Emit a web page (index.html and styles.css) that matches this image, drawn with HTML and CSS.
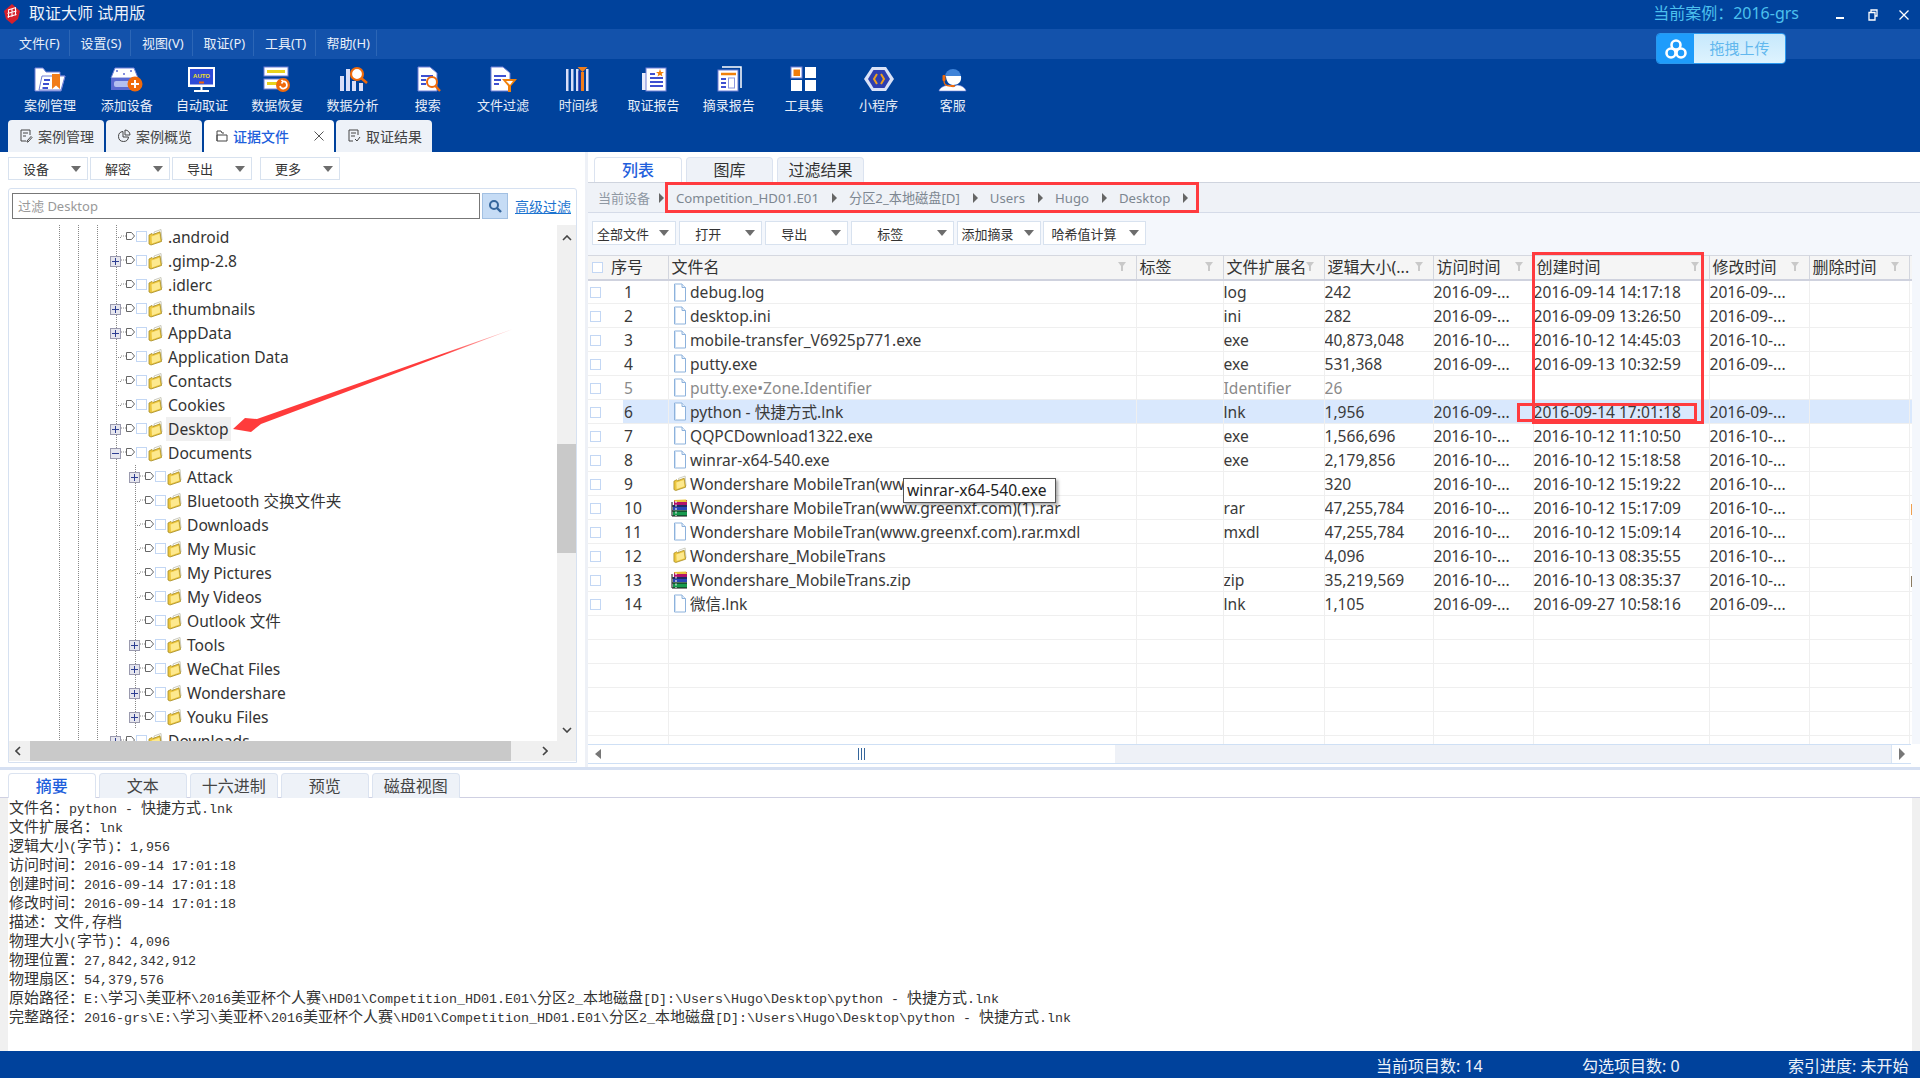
FILE: index.html
```html
<!DOCTYPE html>
<html lang="zh-CN">
<head>
<meta charset="utf-8">
<title>取证大师 试用版</title>
<link rel="stylesheet" href="styles.css">
</head>
<body>
<svg class="defs" width="0" height="0">
  <symbol id="folder" viewBox="0 0 15 17">
    <path d="M6 3 13 .5 14 11 7 13Z" fill="#fff" stroke="#b5b5a0" stroke-width=".7"/>
    <path d="M1 6 4 4.500 5 5.500 12 2.800 13.500 12.500 3 16 1 15Z" fill="#ecc63e" stroke="#a58a22" stroke-width=".8"/>
    <path d="M3.500 7.500 11.500 4.800 12.300 11.500 4 14.500Z" fill="#fde98e"/>
  </symbol>
  <symbol id="mk" viewBox="0 0 14 10">
    <path d="M0 5H5" stroke="#888" stroke-dasharray="1 1"/>
    <path d="M5.500 1.500H10.500L13.500 5 10.500 8.500H5.500Z" fill="#fff" stroke="#666"/>
  </symbol>
  <symbol id="file" viewBox="0 0 13 19">
    <path d="M1 1H8.500L12 4.500V18H1Z" fill="#fff" stroke="#8db2dc" stroke-width="1"/>
    <path d="M8.500 1V4.500H12" fill="#e6eef8" stroke="#8db2dc" stroke-width="1"/>
    <path d="M2 2V17" stroke="#d2e2f4" stroke-width="1"/>
  </symbol>
  <symbol id="rar" viewBox="0 0 17 18">
    <rect x="3" y="1" width="13" height="5" fill="#b0126c"/>
    <path d="M3 1 15 .5 16 3 4 3Z" fill="#e8c23a"/>
    <rect x="2" y="6" width="14" height="5" fill="#2a46b8"/>
    <rect x="2" y="11.500" width="14" height="5.500" fill="#179a4e"/>
    <path d="M1 3V17M1 7H16M1 12H16M1 17H16" stroke="#111" stroke-width="1" fill="none"/>
    <path d="M5 2V17" stroke="#eee" stroke-width="1.200" stroke-dasharray="2 1.500"/>
  </symbol>
  <symbol id="funnel" viewBox="0 0 8 9">
    <path d="M0 0H8L5 4V9H3V4Z" fill="#c9c9c9"/>
  </symbol>
</svg>

<div class="app">
  <header class="head">
    <div class="titlebar">
      <div class="title-left">
        <svg class="logo" viewBox="0 0 18 20"><path d="M9 0 17 7 15 15 9 20 3 15 1 7Z" fill="#d6202b"/><path d="M5 6 13 3.500M4.500 9.500 13.500 7M4.500 13 13.500 10.500M5.500 5.500V14M9 5V13M12.500 4V11.500" stroke="#fff" stroke-width="1.100" fill="none"/></svg>
        <span>取证大师 试用版</span>
      </div>
      <div class="title-right">
        <span class="case">当前案例：2016-grs</span>
        <svg class="win win-min" viewBox="0 0 12 12"><path d="M2 9H10" stroke="#fff" stroke-width="2"/></svg>
        <svg class="win win-res" viewBox="0 0 12 12"><path d="M4 3V1H10V7H8M2 3.500H8V11H2Z" stroke="#fff" stroke-width="1.300" fill="none"/></svg>
        <svg class="win win-cls" viewBox="0 0 12 12"><path d="M1.500 1.500 10.500 10.500M10.500 1.500 1.500 10.500" stroke="#fff" stroke-width="1.300"/></svg>
      </div>
    </div>

    <nav class="menubar">
      <span class="menu-item">文件(F)</span><span class="menu-item">设置(S)</span><span class="menu-item">视图(V)</span><span class="menu-item">取证(P)</span><span class="menu-item">工具(T)</span><span class="menu-item">帮助(H)</span>
    </nav>

    <div class="toolbar">
      <div class="tool">
        <svg viewBox="0 0 34 26"><path d="M2 25V2H10L13 6H27V10H32L28 25Z" fill="#fff" stroke="#6f7fd6" stroke-width="1"/><path d="M6 24 9 10H32L28 24Z" fill="#fff" stroke="#6f7fd6"/><path d="M11 14H17M10 18H16M9.500 22H15" stroke="#3e50d0" stroke-width="1.800"/><path d="M19 8H27V23L23 19.500 19 23Z" fill="#f07d1a"/></svg>
        <span>案例管理</span>
      </div>
      <div class="tool">
        <svg viewBox="0 0 34 26"><path d="M1 12 5 2H24L28 12Z" fill="#fff" stroke="#6f7fd6"/><path d="M1 12H28V24H1Z" fill="#5a6ad2"/><rect x="4" y="15" width="16" height="6" rx="2" fill="#b4bff0"/><circle cx="7" cy="5" r="1" fill="#5a6ad2"/><circle cx="21" cy="5" r="1" fill="#5a6ad2"/><circle cx="14" cy="8" r="1" fill="#5a6ad2"/><circle cx="25" cy="18" r="7.500" fill="#f06a0a"/><path d="M25 14V22M21 18H29" stroke="#fff" stroke-width="2"/></svg>
        <span>添加设备</span>
      </div>
      <div class="tool">
        <svg viewBox="0 0 34 26"><rect x="3" y="1" width="27" height="20" fill="#fff"/><rect x="5" y="3" width="23" height="15.500" fill="#2d4ad6"/><text x="16.500" y="12" class="auto" text-anchor="middle">AUTO</text><rect x="14" y="15.500" width="5" height="2" fill="#f0620a"/><path d="M16.500 21V24M9 25H24" stroke="#fff" stroke-width="2"/></svg>
        <span>自动取证</span>
      </div>
      <div class="tool">
        <svg viewBox="0 0 34 26"><rect x="4" y="1" width="24" height="9" fill="#fff" stroke="#6f7fd6"/><rect x="7" y="4" width="18" height="3" fill="#e8d21c"/><rect x="4" y="13" width="22" height="10" fill="#fff" stroke="#6f7fd6"/><rect x="7" y="16" width="12" height="3" fill="#e8d21c"/><circle cx="23" cy="19" r="7" fill="#f06a0a"/><path d="M20 20A3.500 3.500 0 1 0 23 15.500L21.500 14M23 15.500 21.500 17.500" stroke="#fff" stroke-width="1.700" fill="none"/></svg>
        <span>数据恢复</span>
      </div>
      <div class="tool">
        <svg viewBox="0 0 34 26"><rect x="4" y="10" width="4" height="15" fill="#d9def8"/><rect x="10" y="3" width="4" height="22" fill="#d9def8"/><rect x="16" y="15" width="4" height="10" fill="#d9def8"/><rect x="23" y="17" width="4" height="8" fill="#d9def8"/><circle cx="21" cy="8" r="6" fill="#fff" stroke="#f06a0a" stroke-width="2.200"/><path d="M25 12 31 17" stroke="#f06a0a" stroke-width="2.600"/></svg>
        <span>数据分析</span>
      </div>
      <div class="tool">
        <svg viewBox="0 0 34 26"><path d="M7 1H19L26 7V25H7Z" fill="#fff" stroke="#6f7fd6"/><path d="M10 10H22M10 14H15M10 18H15" stroke="#3e50d0" stroke-width="2"/><circle cx="21" cy="16" r="5" fill="#fff" stroke="#f06a0a" stroke-width="2"/><path d="M24.500 20 29 25" stroke="#f06a0a" stroke-width="2.400"/></svg>
        <span>搜索</span>
      </div>
      <div class="tool">
        <svg viewBox="0 0 34 26"><path d="M5 1H17L24 7V25H5Z" fill="#fff" stroke="#6f7fd6"/><path d="M8 10H20M8 14H15M8 18H13" stroke="#3e50d0" stroke-width="2"/><path d="M16 13H31L25 20V26H22V20Z" fill="#f0800a"/><path d="M20 15H27L24 19Z" fill="#fff"/></svg>
        <span>文件过滤</span>
      </div>
      <div class="tool">
        <svg viewBox="0 0 34 26"><path d="M5 3H7.500V25H5ZM10 3H12.500V25H10ZM15 3H17.500V25H15ZM25 3H27.500V25H25Z" fill="#d9def8"/><rect x="20" y="6" width="3" height="19" fill="#f07d1a"/><path d="M16.500 1H26.500L21.500 6Z" fill="#f07d1a"/><path d="M18.500 5V25" stroke="#1c2fa8" stroke-width="2"/></svg>
        <span>时间线</span>
      </div>
      <div class="tool">
        <svg viewBox="0 0 34 26"><path d="M5 7V24H9V7Z" fill="#e8ebfb"/><rect x="9" y="2" width="20" height="23" fill="#fff" stroke="#6f7fd6"/><path d="M13 8H18M13 12H26M13 16H26M13 20H26" stroke="#3e50d0" stroke-width="2"/><path d="M23 3 24 6H27L24.700 7.800 25.500 10.500 23 9 20.500 10.500 21.300 7.800 19 6H22Z" fill="#f0800a"/></svg>
        <span>取证报告</span>
      </div>
      <div class="tool">
        <svg viewBox="0 0 34 26"><path d="M10 1H29V22" fill="none" stroke="#fff" stroke-width="1.500"/><rect x="6" y="4" width="20" height="21" fill="#fff" stroke="#6f7fd6"/><path d="M9 8H24" stroke="#f0800a" stroke-width="2.500"/><path d="M9 13H14M9 17H14M9 21H14" stroke="#3e50d0" stroke-width="2"/><rect x="16.500" y="12" width="6" height="10" fill="#fff" stroke="#8b97de"/></svg>
        <span>摘录报告</span>
      </div>
      <div class="tool">
        <svg viewBox="0 0 34 26"><rect x="4" y="1" width="11" height="11" fill="#fff" stroke="#6f7fd6"/><rect x="6.500" y="3.500" width="6.500" height="6.500" fill="#f07d0a"/><rect x="18" y="1" width="11" height="11" fill="#fff"/><rect x="4" y="14" width="11" height="11" fill="#fff"/><rect x="18" y="14" width="11" height="11" fill="#fff"/></svg>
        <span>工具集</span>
      </div>
      <div class="tool">
        <svg viewBox="0 0 34 26"><path d="M10 1H24L32 13 24 25H10L2 13Z" fill="#d9e2f8"/><path d="M11.500 4H22.500L28 13 22.500 22H11.500L6 13Z" fill="#2e3fb0"/><path d="M15 8 12 13 15 18M19 8 22 13 19 18" stroke="#f0a01a" stroke-width="2" fill="none"/></svg>
        <span>小程序</span>
      </div>
      <div class="tool">
        <svg viewBox="0 0 34 26"><path d="M9 11A8 8 0 0 1 25 11Z" fill="#3f83d8"/><path d="M10 10H25C26 16 22 19 17 19 13 19 10 15 10 10Z" fill="#fff"/><path d="M3 25C4 21 9 19.500 13 19L17 21 21 19C25 19.500 29 21 30 25Z" fill="#fff" stroke="#6f7fd6" stroke-width=".6"/><rect x="6.500" y="9" width="3" height="6" rx="1" fill="#f06a0a"/><path d="M8 15C8 19 10 20 14 20" stroke="#f06a0a" stroke-width="1.300" fill="none"/><rect x="14" y="19" width="5" height="2" rx="1" fill="#f06a0a"/></svg>
        <span>客服</span>
      </div>
    </div>

    <div class="tabs">
      <div class="tab">
        <svg viewBox="0 0 14 14"><path d="M11 6V1H2V12H7M4 4H9M4 7H7M8 12 12 7.500 13 8.500 9 13H8Z" stroke="#444" fill="none"/></svg>案例管理
      </div>
      <div class="tab">
        <svg viewBox="0 0 14 14"><path d="M6 2.500A5 5 0 1 0 11.500 8H6ZM8 1V6H13A5 5 0 0 0 8 1Z" stroke="#444" fill="none"/></svg>案例概览
      </div>
      <div class="tab tab-active">
        <svg viewBox="0 0 14 14"><path d="M2 12V2H6L7 4H9M4 6H12V12H2V6Z" stroke="#444" fill="none"/></svg><span class="tab-name">证据文件</span>
        <svg class="tab-x" viewBox="0 0 10 10"><path d="M.5 .5 9.500 9.500M9.500 .5 .5 9.500" stroke="#555" stroke-width="1"/></svg>
      </div>
      <div class="tab">
        <svg viewBox="0 0 14 14"><path d="M11 6V1H2V12H6M4 4H9M4 7H8M8 10 10 12 13 8" stroke="#444" fill="none"/></svg>取证结果
      </div>
    </div>
  </header>

  <main class="main">
    <section class="left">
      <div class="btnrow">
        <div class="dd dd-l"><span>设备</span><i></i></div>
        <div class="dd dd-l"><span>解密</span><i></i></div>
        <div class="dd dd-l"><span>导出</span><i></i></div>
        <div class="dd dd-l dd-gap"><span>更多</span><i></i></div>
      </div>
      <div class="panel">
        <div class="filter">
          <div class="filter-input">过滤 Desktop</div>
          <div class="filter-btn"><svg viewBox="0 0 14 14"><circle cx="6" cy="6" r="4" fill="none" stroke="#35669c" stroke-width="2"/><path d="M9 9 13 13" stroke="#35669c" stroke-width="2.400"/></svg></div>
          <a class="adv">高级过滤</a>
        </div>
        <div class="tree-wrap">
          <div class="tree">
            <div class="row"><b class="slot"></b><svg class="mk"><use href="#mk"/></svg><em></em><svg class="fo"><use href="#folder"/></svg><span>.android</span></div>
            <div class="row"><b class="slot plus"></b><svg class="mk"><use href="#mk"/></svg><em></em><svg class="fo"><use href="#folder"/></svg><span>.gimp-2.8</span></div>
            <div class="row"><b class="slot"></b><svg class="mk"><use href="#mk"/></svg><em></em><svg class="fo"><use href="#folder"/></svg><span>.idlerc</span></div>
            <div class="row"><b class="slot plus"></b><svg class="mk"><use href="#mk"/></svg><em></em><svg class="fo"><use href="#folder"/></svg><span>.thumbnails</span></div>
            <div class="row"><b class="slot plus"></b><svg class="mk"><use href="#mk"/></svg><em></em><svg class="fo"><use href="#folder"/></svg><span>AppData</span></div>
            <div class="row"><b class="slot"></b><svg class="mk"><use href="#mk"/></svg><em></em><svg class="fo"><use href="#folder"/></svg><span>Application Data</span></div>
            <div class="row"><b class="slot"></b><svg class="mk"><use href="#mk"/></svg><em></em><svg class="fo"><use href="#folder"/></svg><span>Contacts</span></div>
            <div class="row"><b class="slot"></b><svg class="mk"><use href="#mk"/></svg><em></em><svg class="fo"><use href="#folder"/></svg><span>Cookies</span></div>
            <div class="row"><b class="slot plus"></b><svg class="mk"><use href="#mk"/></svg><em></em><svg class="fo"><use href="#folder"/></svg><span class="picked">Desktop</span></div>
            <div class="row"><b class="slot minus"></b><svg class="mk"><use href="#mk"/></svg><em></em><svg class="fo"><use href="#folder"/></svg><span>Documents</span></div>
            <div class="row sub"><b class="slot plus"></b><svg class="mk"><use href="#mk"/></svg><em></em><svg class="fo"><use href="#folder"/></svg><span>Attack</span></div>
            <div class="row sub"><b class="slot"></b><svg class="mk"><use href="#mk"/></svg><em></em><svg class="fo"><use href="#folder"/></svg><span>Bluetooth 交换文件夹</span></div>
            <div class="row sub"><b class="slot"></b><svg class="mk"><use href="#mk"/></svg><em></em><svg class="fo"><use href="#folder"/></svg><span>Downloads</span></div>
            <div class="row sub"><b class="slot"></b><svg class="mk"><use href="#mk"/></svg><em></em><svg class="fo"><use href="#folder"/></svg><span>My Music</span></div>
            <div class="row sub"><b class="slot"></b><svg class="mk"><use href="#mk"/></svg><em></em><svg class="fo"><use href="#folder"/></svg><span>My Pictures</span></div>
            <div class="row sub"><b class="slot"></b><svg class="mk"><use href="#mk"/></svg><em></em><svg class="fo"><use href="#folder"/></svg><span>My Videos</span></div>
            <div class="row sub"><b class="slot"></b><svg class="mk"><use href="#mk"/></svg><em></em><svg class="fo"><use href="#folder"/></svg><span>Outlook 文件</span></div>
            <div class="row sub"><b class="slot plus"></b><svg class="mk"><use href="#mk"/></svg><em></em><svg class="fo"><use href="#folder"/></svg><span>Tools</span></div>
            <div class="row sub"><b class="slot plus"></b><svg class="mk"><use href="#mk"/></svg><em></em><svg class="fo"><use href="#folder"/></svg><span>WeChat Files</span></div>
            <div class="row sub"><b class="slot plus"></b><svg class="mk"><use href="#mk"/></svg><em></em><svg class="fo"><use href="#folder"/></svg><span>Wondershare</span></div>
            <div class="row sub"><b class="slot plus"></b><svg class="mk"><use href="#mk"/></svg><em></em><svg class="fo"><use href="#folder"/></svg><span>Youku Files</span></div>
            <div class="row"><b class="slot plus"></b><svg class="mk"><use href="#mk"/></svg><em></em><svg class="fo"><use href="#folder"/></svg><span>Downloads</span></div>
          </div>
          <div class="vbar">
            <svg class="vb-up" viewBox="0 0 10 6"><path d="M1 5 5 1 9 5" stroke="#444" stroke-width="1.600" fill="none"/></svg>
            <div class="vb-thumb"></div>
            <svg class="vb-down" viewBox="0 0 10 6"><path d="M1 1 5 5 9 1" stroke="#444" stroke-width="1.600" fill="none"/></svg>
          </div>
        </div>
        <div class="hbar">
          <svg viewBox="0 0 6 10"><path d="M5 1 1 5 5 9" stroke="#444" stroke-width="1.600" fill="none"/></svg>
          <div class="hb-thumb"></div>
          <svg viewBox="0 0 6 10"><path d="M1 1 5 5 1 9" stroke="#444" stroke-width="1.600" fill="none"/></svg>
        </div>
      </div>
    </section>

    <section class="right">
      <div class="rtabs">
        <div class="rtab rtab-on">列表</div>
        <div class="rtab">图库</div>
        <div class="rtab">过滤结果</div>
      </div>
      <div class="crumbs">
        <span class="crumb-first">当前设备</span><i></i>
        <span>Competition_HD01.E01</span><i></i>
        <span>分区2_本地磁盘[D]</span><i></i>
        <span>Users</span><i></i>
        <span>Hugo</span><i></i>
        <span>Desktop</span><i></i>
      </div>
      <div class="rtools">
        <div class="dd dd-a"><span>全部文件</span><i></i></div>
        <div class="dd dd-b"><span>打开</span><i></i></div>
        <div class="dd dd-b"><span>导出</span><i></i></div>
        <div class="dd dd-c"><span>标签</span><i></i></div>
        <div class="dd dd-a"><span>添加摘录</span><i></i></div>
        <div class="dd dd-d"><span>哈希值计算</span><i></i></div>
      </div>
      <div class="grid-wrap">
        <table class="grid">
          <colgroup>
            <col class="c-no"><col class="c-name"><col class="c-tag"><col class="c-ext"><col class="c-size"><col class="c-t"><col class="c-ct"><col class="c-t"><col class="c-t"><col class="c-end">
          </colgroup>
          <thead>
            <tr>
              <th><b class="cb"></b><span class="no-h">序号</span></th>
              <th>文件名<svg class="fn"><use href="#funnel"/></svg></th>
              <th>标签<svg class="fn"><use href="#funnel"/></svg></th>
              <th>文件扩展名<svg class="fn"><use href="#funnel"/></svg></th>
              <th>逻辑大小(...<svg class="fn"><use href="#funnel"/></svg></th>
              <th>访问时间<svg class="fn"><use href="#funnel"/></svg></th>
              <th>创建时间<svg class="fn"><use href="#funnel"/></svg></th>
              <th>修改时间<svg class="fn"><use href="#funnel"/></svg></th>
              <th>删除时间<svg class="fn"><use href="#funnel"/></svg></th>
              <th></th>
            </tr>
          </thead>
          <tbody>
            <tr><td><b class="cb"></b><span class="no">1</span></td><td><svg class="fi"><use href="#file"/></svg>debug.log</td><td></td><td>log</td><td>242</td><td>2016-09-...</td><td>2016-09-14 14:17:18</td><td>2016-09-...</td><td></td><td></td></tr>
            <tr><td><b class="cb"></b><span class="no">2</span></td><td><svg class="fi"><use href="#file"/></svg>desktop.ini</td><td></td><td>ini</td><td>282</td><td>2016-09-...</td><td>2016-09-09 13:26:50</td><td>2016-09-...</td><td></td><td></td></tr>
            <tr><td><b class="cb"></b><span class="no">3</span></td><td><svg class="fi"><use href="#file"/></svg>mobile-transfer_V6925p771.exe</td><td></td><td>exe</td><td>40,873,048</td><td>2016-10-...</td><td>2016-10-12 14:45:03</td><td>2016-10-...</td><td></td><td></td></tr>
            <tr><td><b class="cb"></b><span class="no">4</span></td><td><svg class="fi"><use href="#file"/></svg>putty.exe</td><td></td><td>exe</td><td>531,368</td><td>2016-09-...</td><td>2016-09-13 10:32:59</td><td>2016-09-...</td><td></td><td></td></tr>
            <tr class="dim"><td><b class="cb"></b><span class="no">5</span></td><td><svg class="fi"><use href="#file"/></svg>putty.exe•Zone.Identifier</td><td></td><td>Identifier</td><td>26</td><td></td><td></td><td></td><td></td><td></td></tr>
            <tr class="sel"><td><b class="cb"></b><span class="no">6</span></td><td><svg class="fi"><use href="#file"/></svg>python - 快捷方式.lnk</td><td></td><td>lnk</td><td>1,956</td><td>2016-09-...</td><td>2016-09-14 17:01:18</td><td>2016-09-...</td><td></td><td></td></tr>
            <tr><td><b class="cb"></b><span class="no">7</span></td><td><svg class="fi"><use href="#file"/></svg>QQPCDownload1322.exe</td><td></td><td>exe</td><td>1,566,696</td><td>2016-10-...</td><td>2016-10-12 11:10:50</td><td>2016-10-...</td><td></td><td></td></tr>
            <tr><td><b class="cb"></b><span class="no">8</span></td><td><svg class="fi"><use href="#file"/></svg>winrar-x64-540.exe</td><td></td><td>exe</td><td>2,179,856</td><td>2016-10-...</td><td>2016-10-12 15:18:58</td><td>2016-10-...</td><td></td><td></td></tr>
            <tr><td><b class="cb"></b><span class="no">9</span></td><td><svg class="fi fi-fo"><use href="#folder"/></svg>Wondershare MobileTran(ww</td><td></td><td></td><td>320</td><td>2016-10-...</td><td>2016-10-12 15:19:22</td><td>2016-10-...</td><td></td><td></td></tr>
            <tr><td><b class="cb"></b><span class="no">10</span></td><td><svg class="fi fi-rar"><use href="#rar"/></svg>Wondershare MobileTran(www.greenxf.com)(1).rar</td><td></td><td>rar</td><td>47,255,784</td><td>2016-10-...</td><td>2016-10-12 15:17:09</td><td>2016-10-...</td><td></td><td class="tick"></td></tr>
            <tr><td><b class="cb"></b><span class="no">11</span></td><td><svg class="fi"><use href="#file"/></svg>Wondershare MobileTran(www.greenxf.com).rar.mxdl</td><td></td><td>mxdl</td><td>47,255,784</td><td>2016-10-...</td><td>2016-10-12 15:09:14</td><td>2016-10-...</td><td></td><td></td></tr>
            <tr><td><b class="cb"></b><span class="no">12</span></td><td><svg class="fi fi-fo"><use href="#folder"/></svg>Wondershare_MobileTrans</td><td></td><td></td><td>4,096</td><td>2016-10-...</td><td>2016-10-13 08:35:55</td><td>2016-10-...</td><td></td><td></td></tr>
            <tr><td><b class="cb"></b><span class="no">13</span></td><td><svg class="fi fi-rar"><use href="#rar"/></svg>Wondershare_MobileTrans.zip</td><td></td><td>zip</td><td>35,219,569</td><td>2016-10-...</td><td>2016-10-13 08:35:37</td><td>2016-10-...</td><td></td><td class="tick tick-dark"></td></tr>
            <tr><td><b class="cb"></b><span class="no">14</span></td><td><svg class="fi"><use href="#file"/></svg>微信.lnk</td><td></td><td>lnk</td><td>1,105</td><td>2016-09-...</td><td>2016-09-27 10:58:16</td><td>2016-09-...</td><td></td><td></td></tr>
            <tr><td></td><td></td><td></td><td></td><td></td><td></td><td></td><td></td><td></td><td></td></tr>
            <tr><td></td><td></td><td></td><td></td><td></td><td></td><td></td><td></td><td></td><td></td></tr>
            <tr><td></td><td></td><td></td><td></td><td></td><td></td><td></td><td></td><td></td><td></td></tr>
            <tr><td></td><td></td><td></td><td></td><td></td><td></td><td></td><td></td><td></td><td></td></tr>
            <tr><td></td><td></td><td></td><td></td><td></td><td></td><td></td><td></td><td></td><td></td></tr>
            <tr><td></td><td></td><td></td><td></td><td></td><td></td><td></td><td></td><td></td><td></td></tr>
            <tr><td></td><td></td><td></td><td></td><td></td><td></td><td></td><td></td><td></td><td></td></tr>
          </tbody>
        </table>
      </div>
      <div class="gridbar">
        <div class="gb-btn gb-l"><i></i></div>
        <div class="gb-thumb"><em></em></div>
        <div class="gb-btn gb-r"><i></i></div>
      </div>
    </section>
  </main>

  <div class="band"></div>

  <section class="bottom">
    <div class="btabs">
      <div class="btab btab-on">摘要</div>
      <div class="btab">文本</div>
      <div class="btab">十六进制</div>
      <div class="btab">预览</div>
      <div class="btab">磁盘视图</div>
    </div>
    <div class="summary">
      <p>文件名：<span class="m">python - </span>快捷方式<span class="m">.lnk</span></p>
      <p>文件扩展名：<span class="m">lnk</span></p>
      <p>逻辑大小<span class="m">(</span>字节<span class="m">)</span>：<span class="m">1,956</span></p>
      <p>访问时间：<span class="m">2016-09-14 17:01:18</span></p>
      <p>创建时间：<span class="m">2016-09-14 17:01:18</span></p>
      <p>修改时间：<span class="m">2016-09-14 17:01:18</span></p>
      <p>描述：文件<span class="m">,</span>存档</p>
      <p>物理大小<span class="m">(</span>字节<span class="m">)</span>：<span class="m">4,096</span></p>
      <p>物理位置：<span class="m">27,842,342,912</span></p>
      <p>物理扇区：<span class="m">54,379,576</span></p>
      <p>原始路径：<span class="m">E:\</span>学习<span class="m">\</span>美亚杯<span class="m">\2016</span>美亚杯个人赛<span class="m">\HD01\Competition_HD01.E01\</span>分区<span class="m">2_</span>本地磁盘<span class="m">[D]:\Users\Hugo\Desktop\python - </span>快捷方式<span class="m">.lnk</span></p>
      <p>完整路径：<span class="m">2016-grs\E:\</span>学习<span class="m">\</span>美亚杯<span class="m">\2016</span>美亚杯个人赛<span class="m">\HD01\Competition_HD01.E01\</span>分区<span class="m">2_</span>本地磁盘<span class="m">[D]:\Users\Hugo\Desktop\python - </span>快捷方式<span class="m">.lnk</span></p>
    </div>
  </section>

  <footer class="status">
    <span class="st1">当前项目数: 14</span>
    <span class="st2">勾选项目数: 0</span>
    <span class="st3">索引进度: 未开始</span>
  </footer>

  <div class="upload">
    <div class="up-ic"><svg viewBox="0 0 24 22"><circle cx="12" cy="7" r="4.500" fill="none" stroke="#fff" stroke-width="2.600"/><circle cx="7" cy="15" r="4.500" fill="none" stroke="#fff" stroke-width="2.600"/><circle cx="17" cy="15" r="4.500" fill="none" stroke="#fff" stroke-width="2.600"/></svg></div>
    <div class="up-tx">拖拽上传</div>
  </div>

  <div class="tooltip">winrar-x64-540.exe</div>
  <div class="ann ann-col"></div>
  <div class="ann ann-row"></div>
  <div class="ann ann-crumb"></div>
  <svg class="arrow" viewBox="232 328 282 105">
    <defs><linearGradient id="ag" x1="233" y1="429" x2="513" y2="329" gradientUnits="userSpaceOnUse"><stop offset="0" stop-color="#ff3b3b"/><stop offset=".75" stop-color="#ff3b3b"/><stop offset="1" stop-color="#ff3b3b" stop-opacity=".15"/></linearGradient></defs>
    <polygon points="513,329 261,424 251,432 233,429 245,418 257,419" fill="url(#ag)"/>
  </svg>
</div>
</body>
</html>
```

FILE: styles.css
```css
* { box-sizing: border-box; }
html, body { margin: 0; padding: 0; }
body {
  width: 1920px;
  height: 1078px;
  overflow: hidden;
  background: #fff;
  color: #333;
  font-family: "Noto Sans", "Noto Sans CJK SC", sans-serif;
  font-size: 15px;
}
.defs { position: absolute; }
.app { position: relative; width: 1920px; height: 1078px; display: flex; flex-direction: column; }

/* header */
.head { background: #00429c; height: 152px; flex: none; }
.titlebar { height: 29px; display: flex; justify-content: space-between; align-items: center; color: #eef3fa; }
.title-left { display: flex; align-items: center; padding-left: 3px; gap: 8px; font-size: 16px; line-height: 27px; height: 27px; margin-bottom: 2px; }
.logo { width: 18px; height: 20px; }
.title-right { display: flex; align-items: center; height: 100%; }
.case { color: #4cc0ee; font-size: 16px; margin-right: 35px; line-height: 27px; margin-bottom: 2px; }
.win { width: 12px; height: 12px; }
.win-min { margin-right: 21px; }
.win-res { margin-right: 19px; }
.win-cls { margin-right: 10px; }

.menubar { height: 30px; background: #1352ab; display: flex; padding: 0 0 2px 8px; align-items: center; }
.menu-item { width: 61.500px; height: 26px; line-height: 26px; padding-left: 11px; color: #e9f0fa; font-size: 13px; border-right: 1px solid #2c66b6; white-space: nowrap; }

.toolbar { height: 61px; display: flex; padding: 7px 0 0 10.750px; }
.tool { width: 75.250px; display: flex; flex-direction: column; align-items: center; color: #e8eef8; font-size: 13px; }
.tool:first-child { width: 78.500px; }
.tool:nth-last-child(2) { width: 73.500px; }
.tool svg { width: 34px; height: 26px; margin-bottom: 4px; }
.tool span { line-height: 18px; white-space: nowrap; }
.auto { font: 700 6px "Liberation Sans", sans-serif; fill: #f2e21e; }

.tabs { height: 32px; display: flex; padding-left: 8px; gap: 2px; }
.tab { width: 96px; background: #eef2f8; border-radius: 4px 4px 0 0; display: flex; align-items: center; padding-left: 11px; gap: 5px; font-size: 14px; color: #444; white-space: nowrap; }
.tab svg { width: 14px; height: 14px; flex: none; }
.tab-active { width: 130px; background: #fff; position: relative; gap: 4px; }
.tab-active .tab-x { width: 10px; height: 10px; margin-left: 21px; }
.tab-name { color: #1f5fdc; font-weight: 500; }

/* main */
.main { flex: none; height: 615px; display: flex; }
.left { width: 585px; flex: none; padding: 5px 0 0 8px; }
.btnrow { display: flex; gap: 2px; height: 23px; }
.dd { height: 100%; display: flex; align-items: center; border: 1px solid #d8e2ef; background: #fff; font-size: 13px; color: #333; padding-right: 6px; }
.dd span { flex: 1; text-align: center; white-space: nowrap; }
.dd i { flex: none; width: 0; height: 0; border-left: 5.500px solid transparent; border-right: 5.500px solid transparent; border-top: 6px solid #6d6d6d; }
.dd-l { width: 80px; }
.dd-l span { padding-right: 8px; }
.dd-gap { margin-left: 6px; }

.panel { margin-top: 8px; width: 569px; height: 575px; border: 1px solid #d6e1f1; border-radius: 3px 3px 0 0; display: flex; flex-direction: column; }
.filter { height: 36px; flex: none; display: flex; align-items: flex-start; padding: 4px 0 0 3px; }
.filter-input { width: 468px; height: 26px; border: 1px solid #777; line-height: 24px; padding-left: 5px; font-size: 13px; color: #999; }
.filter-btn { width: 26px; height: 26px; margin-left: 2px; background: #c6dcf5; border: 1px solid #a2c0e2; display: flex; align-items: center; justify-content: center; }
.filter-btn svg { width: 14px; height: 14px; }
.adv { margin: 4px 0 0 7px; font-size: 14px; line-height: 20px; color: #1c73cf; text-decoration: underline; white-space: nowrap; }

.tree-wrap { height: 516px; flex: none; display: flex; overflow: hidden; }
.tree { width: 548px; flex: none; overflow: hidden; }
.row {
  height: 24px;
  display: flex;
  align-items: center;
  padding-left: 101px;
  color: #333;
  white-space: nowrap;
  background-image:
    repeating-linear-gradient(#888 0 1px, transparent 1px 2px),
    repeating-linear-gradient(#888 0 1px, transparent 1px 2px),
    repeating-linear-gradient(#888 0 1px, transparent 1px 2px),
    repeating-linear-gradient(#888 0 1px, transparent 1px 2px);
  background-size: 1px 100%;
  background-repeat: no-repeat;
  background-position: 49.500px 0, 68.500px 0, 87.500px 0, 106.500px 0;
}
.sub {
  padding-left: 120px;
  background-image:
    repeating-linear-gradient(#888 0 1px, transparent 1px 2px),
    repeating-linear-gradient(#888 0 1px, transparent 1px 2px),
    repeating-linear-gradient(#888 0 1px, transparent 1px 2px),
    repeating-linear-gradient(#888 0 1px, transparent 1px 2px),
    repeating-linear-gradient(#888 0 1px, transparent 1px 2px);
  background-position: 49.500px 0, 68.500px 0, 87.500px 0, 106.500px 0, 125.500px 0;
}
.slot { width: 11px; height: 11px; flex: none; position: relative; }
.slot::after { content: ""; position: absolute; left: 6px; right: 0; top: 5px; border-top: 1px dotted #888; }
.plus, .minus { border: 1px solid #9a9aae; background: #e6e6ee; }
.plus::before, .minus::before { content: ""; position: absolute; left: 1px; right: 1px; top: 4px; height: 1px; background: #2e3f92; }
.plus::after { border: 0; top: 1px; bottom: 1px; left: 4px; right: auto; width: 1px; background: #2e3f92; }
.minus::after { display: none; }
.mk { width: 14px; height: 10px; flex: none; margin-right: 1px; position: relative; top: -1px; }
.row em { width: 11px; height: 11px; flex: none; border: 1px solid #c3d7f4; background: #fff; margin-right: 1px; position: relative; top: -1px; }
.fo { width: 15px; height: 17px; flex: none; margin-right: 3px; }
.row span { padding: 0 2px 0 2px; line-height: 24px; font-size: 15.600px; }
.picked { background: #f0f0f0; }

.vbar { width: 19px; height: 516px; flex: none; background: #f0f0f0; position: relative; }
.vb-up { position: absolute; left: 4.500px; top: 10px; width: 10px; height: 6px; }
.vb-down { position: absolute; left: 4.500px; bottom: 8px; width: 10px; height: 6px; }
.vb-thumb { position: absolute; left: 0; top: 219px; width: 19px; height: 109px; background: #c9c9c9; }
.hbar { height: 20px; flex: none; background: #f0f0f0; display: flex; align-items: center; padding: 0 28px 0 6px; }
.hbar svg { width: 6px; height: 10px; flex: none; }
.hbar svg:last-child { margin-left: auto; }
.hb-thumb { width: 481px; height: 20px; background: #c9c9c9; margin-left: 9px; }

/* right */
.right { flex: 1; min-width: 0; border-left: 3px solid #eef1f7; display: flex; flex-direction: column; }
.rtabs { height: 31px; flex: none; display: flex; padding: 5px 0 0 6px; gap: 4px; border-bottom: 1px solid #cfd4de; }
.rtab { width: 87px; height: 25px; background: #eef2f8; border: 1px solid #dbe3f0; border-bottom: 0; border-radius: 4px 4px 0 0; text-align: center; line-height: 25px; font-size: 16px; color: #333; }
.rtab-on { width: 88px; background: #fff; color: #1f5fdc; font-weight: 500; }
.crumbs { height: 30px; flex: none; background: #eff2f7; display: flex; align-items: center; border-bottom: 1px solid #d5dbe8; padding-left: 10px; font-size: 13.200px; color: #7d8791; white-space: nowrap; }
.crumbs i { width: 0; height: 0; flex: none; margin: 0 12px 0 13px; border-top: 5px solid transparent; border-bottom: 5px solid transparent; border-left: 5px solid #666; }
.crumb-first { color: #8f98a3; font-size: 13px; margin-right: -4px; }
.rtools { height: 42px; flex: none; background: #f4f7fc; display: flex; padding: 8px 0 10px 4px; gap: 2.500px; }
.dd-a { width: 84px; }
.dd-a span { padding-right: 6px; }
.dd-b { width: 83.500px; }
.dd-b span { padding-right: 8px; }
.dd-c { width: 103.500px; }
.dd-c span { padding-right: 8px; }
.dd-d { width: 103px; }
.dd-d span { padding-right: 5px; }

.grid-wrap { height: 489px; flex: none; overflow: hidden; background: #fff; border-right: 8px solid #f4f7fc; }
.grid { width: 1324px; table-layout: fixed; border-collapse: collapse; margin-left: -1px; }
.c-no { width: 81px; } .c-name { width: 468px; } .c-tag { width: 87px; } .c-ext { width: 101px; } .c-size { width: 109px; } .c-t { width: 100px; } .c-ct { width: 176px; } .c-end { width: 3px; }
.grid th { height: 24px; background: #f5f5f5; border-top: 1px solid #d5d8e0; border-bottom: 2px solid #cfd2de; border-right: 1px solid #d3d6de; font-weight: 400; font-size: 16px; text-align: left; padding: 0 0 0 3px; position: relative; color: #333; white-space: nowrap; overflow: hidden; line-height: 20px; }
.grid th:first-child { padding-left: 2px; }
.grid td { height: 24px; border-bottom: 1px solid #efefef; border-right: 1px solid #efefef; font-size: 15.600px; padding: 0; white-space: nowrap; overflow: hidden; color: #3a3a3a; line-height: 22px; }
.grid td:nth-child(2) { padding-left: 21.500px; position: relative; }
.grid tr:last-child td { height: 9px; }
.fn { position: absolute; right: 9.500px; top: 6px; width: 8px; height: 9px; }
.cb { display: inline-block; width: 11px; height: 11px; border: 1px solid #c3d7f4; background: #fff; vertical-align: 0; margin-left: 3px; }
.no-h { margin-left: 8px; }
.no { display: inline-block; margin-left: 23px; }
.fi { position: absolute; left: 4px; top: 2px; width: 14px; height: 19px; }
.fi-fo { top: 3px; height: 17px; }
.fi-rar { left: 2.500px; top: 3px; width: 17px; height: 18px; }
.dim td { color: #8a8a8a; }
.sel td { background: #d9e8fd; }
.sel td:first-child { background: linear-gradient(to right, #fff 36px, #d9e8fd 36px); }
.tick { background: linear-gradient(#f0a050, #f0a050) no-repeat 1px 8px / 2px 11px; }
.tick-dark { background-image: linear-gradient(#8a7a60, #8a7a60); }

.gridbar { height: 20px; flex: none; background: #eef1f7; border-top: 1px solid #cfe0f5; border-bottom: 1px solid #cfe0f5; display: flex; align-items: stretch; position: relative; margin-right: 9px; }
.gb-btn { width: 20px; background: #fff; border-left: 1px solid #d8e4f3; display: flex; align-items: center; justify-content: center; }
.gb-l { border: 0; }
.gb-l i { border-top: 5px solid transparent; border-bottom: 5px solid transparent; border-right: 6px solid #777; }
.gb-r { margin-left: auto; }
.gb-r i { border-top: 6px solid transparent; border-bottom: 6px solid transparent; border-left: 6px solid #777; }
.gb-thumb { width: 507px; background: #fff; display: flex; align-items: center; justify-content: center; }
.gb-thumb em { width: 7px; height: 12px; border-left: 1px solid #35669c; border-right: 1px solid #35669c; background: linear-gradient(#35669c, #35669c) center / 1px 100% no-repeat; }

.band { height: 3px; flex: none; background: #d6e0f2; }

/* bottom */
.bottom { flex: 1; min-height: 0; display: flex; flex-direction: column; }
.btabs { height: 28px; flex: none; display: flex; padding: 3px 0 0 8px; gap: 3.500px; border-bottom: 1px solid #cfd0e2; }
.btab { width: 87.500px; height: 25px; background: #eef2f8; border: 1px solid #dbe3f0; border-bottom: 0; border-radius: 4px 4px 0 0; text-align: center; line-height: 24px; font-size: 16px; color: #444; }
.btab-on { background: #fff; color: #1f5fdc; font-weight: 500; }
.summary { flex: 1; background: #fff; border-left: 8px solid #f0f0f0; border-right: 8px solid #f0f0f0; padding: 0 0 0 1px; font-family: "Noto Sans CJK SC", sans-serif; font-size: 15px; color: #333; }
.summary p { margin: 0; height: 19px; line-height: 18px; white-space: nowrap; }
.m { font-family: "Liberation Mono", monospace; font-size: 13.330px; white-space: pre; }

.status { height: 27px; flex: none; background: #00429c; color: #eef3fa; font-size: 16px; display: flex; align-items: center; padding-left: 1376px; }
.st1 { width: 206px; }
.st2 { width: 206px; }

/* overlays */
.upload { position: absolute; left: 1656px; top: 33px; width: 130px; height: 31px; display: flex; border-radius: 4px; overflow: hidden; border: 1px solid #2a98ee; }
.up-ic { width: 37px; background: #1e9cfb; display: flex; align-items: center; justify-content: center; }
.up-ic svg { width: 24px; height: 22px; }
.up-tx { flex: 1; background: linear-gradient(#c6e8fc, #def3fe); color: #62b8ee; font-size: 15px; line-height: 29px; text-align: center; }
.tooltip { position: absolute; left: 903px; top: 478px; width: 153px; height: 25px; background: #fff; border: 1px solid #555; box-shadow: 2px 2px 3px rgba(0,0,0,.35); font-size: 15.600px; line-height: 23px; padding-left: 3px; color: #222; white-space: nowrap; }
.ann { position: absolute; border: 3px solid #ff3b3f; }
.ann-col { left: 1532px; top: 252px; width: 172px; height: 172px; }
.ann-row { left: 1517px; top: 403px; width: 180px; height: 19px; }
.ann-crumb { left: 665px; top: 182px; width: 534px; height: 31px; }
.arrow { position: absolute; left: 232px; top: 328px; width: 282px; height: 105px; }
```
